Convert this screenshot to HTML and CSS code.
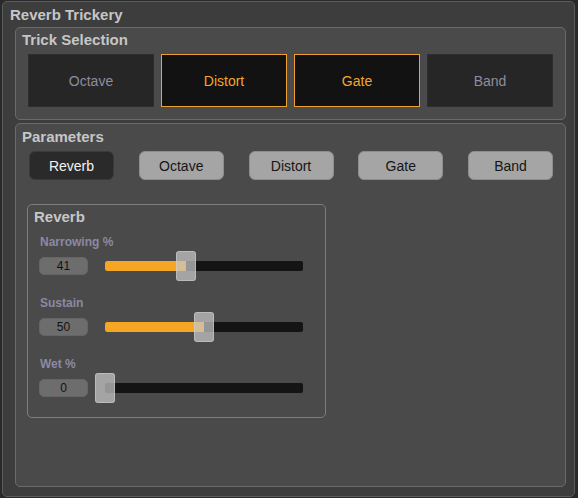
FILE: index.html
```html
<!DOCTYPE html>
<html>
<head>
<meta charset="utf-8">
<link rel="stylesheet" href="styles.css">
</head>
<body>
<div class="app">
  <div class="app-title">Reverb Trickery</div>

  <section class="panel trick">
    <div class="panel-title">Trick Selection</div>
    <div class="trick-grid">
      <div class="trick-btn">Octave</div>
      <div class="trick-btn on">Distort</div>
      <div class="trick-btn on">Gate</div>
      <div class="trick-btn">Band</div>
    </div>
  </section>

  <section class="panel params">
    <div class="panel-title">Parameters</div>
    <div class="pills">
      <div class="pill active">Reverb</div>
      <div class="pill">Octave</div>
      <div class="pill">Distort</div>
      <div class="pill">Gate</div>
      <div class="pill">Band</div>
    </div>

    <div class="sub">
      <div class="sub-title">Reverb</div>

      <div class="param first">
        <div class="param-label">Narrowing %</div>
        <div class="param-row">
          <div class="num">41</div>
          <div class="slider">
            <div class="track"><div class="fill" style="width:41%"></div></div>
            <div class="thumb" style="left:41%"></div>
          </div>
        </div>
      </div>

      <div class="param">
        <div class="param-label">Sustain</div>
        <div class="param-row">
          <div class="num">50</div>
          <div class="slider">
            <div class="track"><div class="fill" style="width:50%"></div></div>
            <div class="thumb" style="left:50%"></div>
          </div>
        </div>
      </div>

      <div class="param">
        <div class="param-label">Wet %</div>
        <div class="param-row">
          <div class="num">0</div>
          <div class="slider">
            <div class="track"><div class="fill" style="width:0%"></div></div>
            <div class="thumb" style="left:0%"></div>
          </div>
        </div>
      </div>
    </div>
  </section>
</div>
</body>
</html>
```

FILE: styles.css
```css
* { box-sizing: border-box; }

html, body {
  margin: 0;
  padding: 0;
  background: #2a2a2a;
  font-family: "Liberation Sans", Arial, sans-serif;
}

body {
  width: 578px;
  height: 498px;
  padding: 1px 3px 1px 2px;
}

.app {
  width: 573px;
  height: 496px;
  background: #3d3d3d;
  border: 1px solid #5c5c5c;
  border-radius: 5px;
  padding: 4px 9px 9px 7px;
  display: flex;
  flex-direction: column;
}

.app-title {
  font-size: 15px;
  font-weight: bold;
  line-height: 18px;
  color: #c6c6c6;
  margin-bottom: 3px;
}

.panel {
  background: #4a4a4a;
  border: 1px solid #6a6a6a;
  border-radius: 5px;
  width: 551px;
  margin-left: 5px;
}

.panel-title {
  font-size: 15px;
  font-weight: bold;
  line-height: 18px;
  color: #c6c6c6;
}

.trick {
  height: 93px;
  padding: 3px 12px 0 6px;
}

.trick-grid {
  margin-top: 5px;
  margin-left: 6px;
  display: grid;
  grid-template-columns: repeat(4, 1fr);
  gap: 7px;
}

.trick-btn {
  height: 53px;
  background: #262626;
  border: 1px solid #2e2e2e;
  color: #8e8c9e;
  font-size: 14px;
  display: flex;
  align-items: center;
  justify-content: center;
}

.trick-btn.on {
  background: #121212;
  border: 1px solid #f0a033;
  color: #f5a52a;
}

.params {
  margin-top: 3px;
  flex: 1;
  padding: 4px 12px 0 6px;
}

.pills {
  margin-top: 5px;
  display: flex;
  justify-content: space-between;
  padding-left: 7px;
}

.pill {
  width: 85px;
  height: 29px;
  border-radius: 6px;
  background: #a5a5a5;
  border: 1px solid #8d8d8d;
  color: #161616;
  font-size: 14px;
  display: flex;
  align-items: center;
  justify-content: center;
}

.pill.active {
  background: #2a2a2a;
  border-color: #3a3a3a;
  color: #f2f2f2;
}

.sub {
  margin-top: 24px;
  margin-left: 5px;
  width: 299px;
  border: 1px solid #7e7e7e;
  border-radius: 5px;
  padding: 3px 6px 14px 6px;
}

.sub-title {
  font-size: 15px;
  font-weight: bold;
  line-height: 18px;
  color: #c6c6c6;
}

.param {
  margin-left: 5px;
  margin-top: 15px;
}

.param.first {
  margin-top: 9px;
}

.param-label {
  font-size: 12px;
  font-weight: bold;
  line-height: 14px;
  color: #8c89a2;
  padding-left: 1px;
}

.param-row {
  margin-top: 2px;
  height: 30px;
  display: flex;
  align-items: center;
}

.num {
  width: 49px;
  height: 18px;
  border-radius: 5px;
  background: #6d6d6d;
  border: 1px solid #656565;
  color: #111;
  font-size: 12px;
  display: flex;
  align-items: center;
  justify-content: center;
}

.slider {
  position: relative;
  margin-left: 17px;
  width: 198px;
  height: 30px;
  display: flex;
  align-items: center;
}

.track {
  width: 100%;
  height: 10px;
  border-radius: 2px;
  background: #141414;
  overflow: hidden;
}

.fill {
  height: 100%;
  background: #f5a623;
}

.thumb {
  position: absolute;
  top: 0;
  width: 20px;
  height: 30px;
  margin-left: -10px;
  border-radius: 3px;
  background: rgba(200, 200, 200, 0.72);
  border: 1px solid rgba(210, 210, 210, 0.5);
}
```
